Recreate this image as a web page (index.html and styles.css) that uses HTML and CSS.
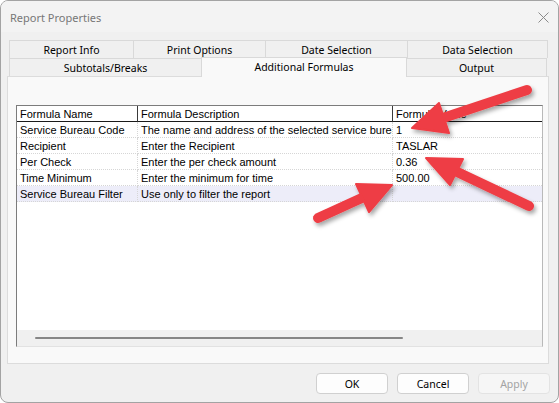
FILE: index.html
```html
<!DOCTYPE html>
<html>
<head>
<meta charset="utf-8">
<title>Report Properties</title>
<link rel="stylesheet" href="styles.css">
</head>
<body>
<div class="window">
  <div class="titlebar">
    <span class="title">Report Properties</span>
    <svg class="close" width="11" height="11" viewBox="0 0 11 11"><path d="M0.5 0.5 L10.5 10.5 M10.5 0.5 L0.5 10.5" stroke="#8a8a8a" stroke-width="1" fill="none"/></svg>
  </div>
  <div class="content">
    <div class="tabs">
      <div class="tabrow">
        <div class="tab w1">Report Info</div>
        <div class="tab w2">Print Options</div>
        <div class="tab w3">Date Selection</div>
        <div class="tab w4 last">Data Selection</div>
      </div>
      <div class="tabrow">
        <div class="tab w5">Subtotals/Breaks</div>
        <div class="tab w6 active">Additional Formulas</div>
        <div class="tab w4 last">Output</div>
      </div>
    </div>
    <div class="panel">
      <div class="listview">
        <div class="grid">
          <div class="hcell">Formula Name</div>
          <div class="hcell">Formula Description</div>
          <div class="hcell last">Formula Value</div>

          <div class="cell">Service Bureau Code</div>
          <div class="cell">The name and address of the selected service bureau</div>
          <div class="cell last">1</div>

          <div class="cell">Recipient</div>
          <div class="cell">Enter the Recipient</div>
          <div class="cell last">TASLAR</div>

          <div class="cell">Per Check</div>
          <div class="cell">Enter the per check amount</div>
          <div class="cell last">0.36</div>

          <div class="cell">Time Minimum</div>
          <div class="cell">Enter the minimum for time</div>
          <div class="cell last">500.00</div>

          <div class="cell sel">Service Bureau Filter</div>
          <div class="cell sel">Use only to filter the report</div>
          <div class="cell sel last"></div>
        </div>
        <div class="hscroll"><div class="thumb"></div></div>
      </div>
    </div>
  </div>
  <div class="footer">
    <button class="btn">OK</button>
    <button class="btn">Cancel</button>
    <button class="btn disabled">Apply</button>
  </div>
  <svg class="arrows" width="557" height="401" viewBox="1 1 557 401">
    <defs>
      <filter id="sh" x="-20%" y="-40%" width="140%" height="180%">
        <feDropShadow dx="2" dy="3" stdDeviation="2" flood-color="#000" flood-opacity="0.35"/>
      </filter>
    </defs>
    <g filter="url(#sh)" fill="#ee3d44" stroke="#ee3d44">
      <line x1="527" y1="90" x2="440" y2="119" stroke-width="10" stroke-linecap="round"/>
      <polygon points="412,128 449,133 439,103" stroke-width="2" stroke-linejoin="round"/>
      <line x1="529" y1="206" x2="453" y2="170" stroke-width="10" stroke-linecap="round"/>
      <polygon points="426,158 463,159 450,185" stroke-width="2" stroke-linejoin="round"/>
      <line x1="318" y1="218" x2="364" y2="197" stroke-width="10" stroke-linecap="round"/>
      <polygon points="392,185 356,184 369,212" stroke-width="2" stroke-linejoin="round"/>
    </g>
  </svg>
</div>
</body>
</html>
```

FILE: styles.css
```css
html, body {
  margin: 0;
  padding: 0;
  background: #ffffff;
}
.window {
  position: relative;
  width: 559px;
  height: 403px;
  box-sizing: border-box;
  border: 1px solid #a3a3a3;
  border-radius: 8px;
  background: #f0f0f0;
  overflow: hidden;
  display: flex;
  flex-direction: column;
  font-family: "Noto Sans", "Liberation Sans", sans-serif;
  font-size: 10px;
  color: #000;
}
.titlebar {
  height: 31px;
  flex: none;
  background: #f3f3f3;
  display: flex;
  align-items: center;
  justify-content: space-between;
  padding: 0 9px 0 9px;
}
.title {
  color: #777777;
  font-size: 11px;
  margin-top: 1px;
}
.close {
  display: block;
  margin-top: 1px;
}
.content {
  flex: none;
  padding: 8px 9px 0 6px;
}
.tabs {
  margin: 0 1px 0 2px;
}
.tabrow {
  display: flex;
  height: 18px;
}
.tab {
  box-sizing: border-box;
  height: 18px;
  border: 1px solid #d9d9d9;
  border-bottom: none;
  border-right: none;
  background: #f0f0f0;
  display: flex;
  align-items: center;
  justify-content: center;
  white-space: nowrap;
  font-size: 10.5px;
}
.tab.last {
  border-right: 1px solid #d9d9d9;
}
.w1 { width: 124px; }
.w2 { width: 132px; }
.w3 { width: 142px; }
.w4 { width: 141px; }
.w5 { width: 192px; }
.w6 { width: 206px; }
.tab.active {
  position: relative;
  z-index: 1;
  height: 20px;
  margin-top: -1px;
  background: #f9f9f9;
  border-right: 1px solid #d9d9d9;
  margin-right: -1px;
  padding-bottom: 2px;
}
.panel {
  box-sizing: border-box;
  height: 288px;
  background: #f9f9f9;
  border: 1px solid #dcdcdc;
  padding: 28px 5px 16px 8px;
}
.listview {
  box-sizing: border-box;
  width: 527px;
  height: 242px;
  background: #ffffff;
  border-style: solid;
  border-width: 1px;
  border-color: #7c7c7c #b9b9b9 #e2e2e2 #7c7c7c;
  display: flex;
  flex-direction: column;
  font-family: "Liberation Sans", Arial, sans-serif;
  font-size: 11px;
}
.grid {
  flex: 1;
  display: grid;
  grid-template-columns: 121px 255px 1fr;
  grid-auto-rows: 16px;
  align-content: start;
}
.hcell {
  box-sizing: border-box;
  height: 16px;
  padding: 1px 0 0 3px;
  border-right: 1px solid #3a3a3a;
  border-bottom: 1px solid #1a1a1a;
  white-space: nowrap;
  overflow: hidden;
  line-height: 14px;
}
.hcell.last {
  border-right: none;
}
.cell {
  box-sizing: border-box;
  height: 16px;
  padding: 1px 0 0 3px;
  border-right: 1px dotted #d6d6d6;
  border-bottom: 1px dotted #d6d6d6;
  white-space: nowrap;
  overflow: hidden;
  line-height: 14px;
}
.cell.last {
  border-right: none;
}
.cell.sel {
  background: #ededf9;
}
.hscroll {
  flex: none;
  height: 16px;
  background: #f0f0f0;
  display: flex;
  align-items: center;
}
.thumb {
  margin-left: 18px;
  width: 368px;
  height: 2px;
  background: #868686;
  border-radius: 1px;
}
.footer {
  flex: 1;
  display: flex;
  justify-content: flex-end;
  align-items: flex-start;
  gap: 9px;
  padding: 9px 8px 0 0;
}
.btn {
  box-sizing: border-box;
  width: 72px;
  height: 21px;
  margin: 0;
  padding: 0;
  background: #fdfdfd;
  border: 1px solid #d0d0d0;
  border-radius: 4px;
  font-family: "Noto Sans", "Liberation Sans", sans-serif;
  font-size: 10.5px;
  color: #000;
}
.btn.disabled {
  background: #f6f6f6;
  border-color: #e3e3e3;
  color: #a3a3a3;
}
.arrows {
  position: absolute;
  left: 0;
  top: 0;
  pointer-events: none;
}
```
